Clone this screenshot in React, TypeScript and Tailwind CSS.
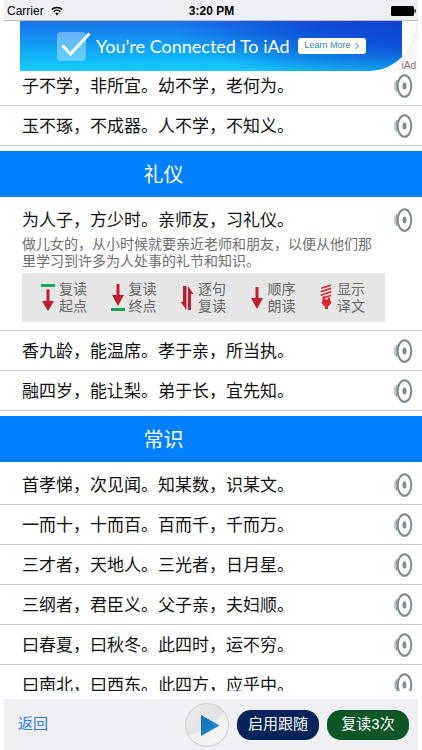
import React from 'react';

interface Verse {
    text: string;
    note?: string;
}

interface Section {
    title?: string;
    verses: Verse[];
}

const sections: Section[] = [
    {
        verses: [
            { text: '子不学，非所宜。幼不学，老何为。' },
            { text: '玉不琢，不成器。人不学，不知义。' },
        ],
    },
    {
        title: '礼仪',
        verses: [
            {
                text: '为人子，方少时。亲师友，习礼仪。',
                note: '做儿女的，从小时候就要亲近老师和朋友，以便从他们那里学习到许多为人处事的礼节和知识。',
            },
            { text: '香九龄，能温席。孝于亲，所当执。' },
            { text: '融四岁，能让梨。弟于长，宜先知。' },
        ],
    },
    {
        title: '常识',
        verses: [
            { text: '首孝悌，次见闻。知某数，识某文。' },
            { text: '一而十，十而百。百而千，千而万。' },
            { text: '三才者，天地人。三光者，日月星。' },
            { text: '三纲者，君臣义。父子亲，夫妇顺。' },
            { text: '曰春夏，曰秋冬。此四时，运不穷。' },
            { text: '曰南北，曰西东。此四方，应乎中。' },
        ],
    },
];

const StartIcon = () => (
    <svg viewBox="0 0 14 28" className="w-[14px] h-7" aria-hidden="true">
        <path d="M0 0h14v3H0z" fill="#17a558" />
        <path d="M5.5 5.500h3V17H13L7 27 1 17h4.500z" fill="#be1e2d" />
    </svg>
);

const EndIcon = () => (
    <svg viewBox="0 0 14 28" className="w-[14px] h-7" aria-hidden="true">
        <path d="M5.500 0h3v11H13L7 22 1 11h4.500z" fill="#be1e2d" />
        <path d="M0 24h14v3H0z" fill="#17a558" />
    </svg>
);

const SentenceIcon = () => (
    <svg viewBox="0 0 14 28" className="w-[14px] h-7" aria-hidden="true">
        <path d="M3 2h3.500v24L.5 18H3zM8 2l5.500 8H11v16H8z" fill="#be1e2d" />
    </svg>
);

const OrderIcon = () => (
    <svg viewBox="0 0 14 28" className="w-[14px] h-7" aria-hidden="true">
        <path d="M5.500 3h3v11H13L7 25 1 14h4.500z" fill="#be1e2d" />
    </svg>
);

const LampIcon = () => (
    <svg viewBox="0 0 14 28" className="w-[14px] h-7" aria-hidden="true">
        <path d="M3 4l8-2.500M2.500 7.500L11.500 4.500M2.500 11L11.500 8M4 14l7.500-2.500" stroke="#e3222a" strokeWidth="1.800" strokeLinecap="round" />
        <path d="M4 12.500h2v3h3v-2h2v3h1v3l-2 2.500H9V25H6v-3H5l-2-2.500v-3h1z" fill="#e3222a" />
    </svg>
);

const tools = [
    { lines: ['复读', '起点'], Icon: StartIcon },
    { lines: ['复读', '终点'], Icon: EndIcon },
    { lines: ['逐句', '复读'], Icon: SentenceIcon },
    { lines: ['顺序', '朗读'], Icon: OrderIcon },
    { lines: ['显示', '译文'], Icon: LampIcon },
];

const StatusBar = () => (
    <div className="mx-1 h-[21px] shrink-0 grid grid-cols-3 items-center bg-[#efeff4] border-b border-[#b9b9bf] pl-[3px] pr-0.5 pt-px text-xs text-black">
        <div className="flex items-center gap-[7px]">
            <span>Carrier</span>
            <svg viewBox="0 0 12 10" className="w-3 h-[10px]" fill="none" stroke="#000" aria-hidden="true">
                <path d="M.7 3.600a7.500 7.500 0 0 1 10.600 0" strokeWidth="1.500" />
                <path d="M2.700 5.700a4.700 4.700 0 0 1 6.600 0" strokeWidth="1.500" />
                <path d="M6 9.500L4.200 7.600a2.600 2.600 0 0 1 3.600 0z" fill="#000" stroke="none" />
            </svg>
        </div>
        <div className="text-center font-bold">3:20 PM</div>
        <svg viewBox="0 0 25 10" className="w-[25px] h-[10px] justify-self-end" aria-hidden="true">
            <rect width="23" height="10" rx="1.500" />
            <path d="M23.500 3q1.500.5 1.500 2t-1.500 2z" />
        </svg>
    </div>
);

const AdBanner = () => (
    <div className="relative ml-5 mr-1 h-[50px] shrink-0 bg-linear-to-r from-white from-90% to-[#faf8fa] to-95%">
        <div className="flex h-full overflow-hidden rounded-br-[51px] border-r border-[#ebe6ea] bg-white pr-[15px]">
            <div className="flex flex-1 items-center bg-linear-to-b from-[#1c72ec] to-[#17ccfd]">
                <div className="flex h-full flex-1 items-center bg-[radial-gradient(ellipse_60%_130%_at_100%_0%,#0d43d0_0%,#0d43d0cc_40%,#0d43d000_100%)] pl-[37px]">
                    <svg viewBox="0 0 34 30" className="w-[34px] h-[30px]" fill="none" aria-hidden="true">
                        <rect y="1" width="29" height="29" rx="4" fill="#fff" fillOpacity=".35" />
                        <path d="M5.500 14.500l8 8.500L32.500 2.500" stroke="#fff" strokeWidth="3" />
                    </svg>
                    <span className="ml-[5px] whitespace-nowrap text-[18px] text-white font-[Lato,sans-serif]">You’re Connected To iAd</span>
                    <a href="#ad" className="ml-2 flex h-4 items-center gap-1 whitespace-nowrap rounded-[3px] bg-white px-[7px] text-[9px] text-[#2f7fb8]">
                        Learn More
                        <svg viewBox="0 0 4 8" className="w-1 h-2" fill="none" stroke="#2f7fb8" aria-hidden="true">
                            <path d="M.5 1l3 3-3 3" />
                        </svg>
                    </a>
                </div>
            </div>
        </div>
        <span className="absolute bottom-0 right-0.5 text-[10px] leading-[10px] text-[#77777c]">iAd</span>
    </div>
);

const SpeakerButton = () => (
    <button type="button" aria-label="朗读" className="shrink-0">
        <svg viewBox="0 0 20 24" className="w-5 h-6" fill="none" stroke="#7d8a90" aria-hidden="true">
            <ellipse cx="11.500" cy="12" rx="6.800" ry="10.800" strokeWidth="2" />
            <ellipse cx="11.500" cy="12" rx="2" ry="3.500" fill="#7d8a90" stroke="none" />
            <path d="M4 6Q2 12 4 18" strokeWidth="1.500" strokeOpacity=".8" />
            <path d="M2 7.500Q.3 12 2 16.500" strokeOpacity=".5" />
        </svg>
    </button>
);

const VerseRow: React.FC<{ verse: Verse }> = ({ verse }) => {
    if (!verse.note) {
        return (
            <li className="flex h-10 items-center justify-between border-b border-[#c8c8cc] pl-[22px] pr-[9px]">
                <p className="pt-0.5 text-[17px]">{verse.text}</p>
                <SpeakerButton />
            </li>
        );
    }

    return (
        <li className="border-b border-[#c8c8cc] pt-2 pb-2 pl-[22px]">
            <div className="flex h-6 items-center justify-between pr-[9px]">
                <p className="pt-0.5 text-[17px]">{verse.text}</p>
                <SpeakerButton />
            </div>
            <p className="mt-1 mr-[40px] text-sm leading-[17px] text-[#6e6e6e]">{verse.note}</p>
            <div className="mt-[3px] mr-[37px] flex h-[49px] items-center justify-between bg-[#e6e6e6] pl-[19px] pr-5">
                {tools.map(({ lines, Icon }) => (
                    <button key={lines.join('')} type="button" className="flex items-center gap-1 text-left text-sm leading-[17px] text-[#666]">
                        <Icon />
                        <span>
                            {lines[0]}
                            <br />
                            {lines[1]}
                        </span>
                    </button>
                ))}
            </div>
        </li>
    );
};

const Toolbar = () => (
    <footer className="mx-1 mt-2 flex h-[51px] shrink-0 items-center gap-2 bg-[#efeff4] pl-[14px] pr-[9px] text-[15px]">
        <button type="button" className="mr-auto text-[#2a7de1]">返回</button>
        <button type="button" aria-label="播放" className="rounded-full">
            <svg viewBox="0 0 44 44" className="size-11" aria-hidden="true">
                <defs>
                    <linearGradient id="disc" x1="0" y1="0" x2="1" y2="1">
                        <stop offset="0" stopColor="#ececee" />
                        <stop offset=".5" stopColor="#e2e2e4" />
                        <stop offset="1" stopColor="#f4f4f5" />
                    </linearGradient>
                    <linearGradient id="arrow" x1="0" y1="0" x2="1" y2="1">
                        <stop offset="0" stopColor="#1168b4" />
                        <stop offset="1" stopColor="#2093dc" />
                    </linearGradient>
                </defs>
                <circle cx="22" cy="22" r="21.500" fill="url(#disc)" stroke="#cdcdd0" />
                <path d="M3 32Q24 30 39 9a21 21 0 0 1-36 23z" fill="#fafafa" fillOpacity=".6" />
                <path d="M16 12l18.500 10.500L16 33z" fill="url(#arrow)" />
            </svg>
        </button>
        <button type="button" className="h-[30px] w-[82px] rounded-[14px] bg-[#04235a] text-white">启用跟随</button>
        <button type="button" className="h-[30px] w-[82px] rounded-[14px] bg-[#0d5626] text-white">复读3次</button>
    </footer>
);

const App = () => {
    return (
        <div lang="zh-CN" className="flex h-screen flex-col overflow-hidden bg-white text-[#111] font-['Liberation_Sans','Noto_Sans_CJK_SC',sans-serif]">
            <StatusBar />
            <AdBanner />
            <main className="min-h-0 flex-1 overflow-hidden">
                {/* the list is scrolled a little under the banner */}
                <div className="-mt-[5px]">
                    {sections.map((section, index) => (
                        <section key={index}>
                            {section.title && (
                                <h2 className="mt-[5px] mb-[3px] flex h-[46px] items-center bg-[#007fff] pl-[34%] pt-0.5 text-xl text-white">
                                    {section.title}
                                </h2>
                            )}
                            <ul>
                                {section.verses.map((verse) => (
                                    <VerseRow key={verse.text} verse={verse} />
                                ))}
                            </ul>
                        </section>
                    ))}
                </div>
            </main>
            <Toolbar />
        </div>
    );
};

export default App;
